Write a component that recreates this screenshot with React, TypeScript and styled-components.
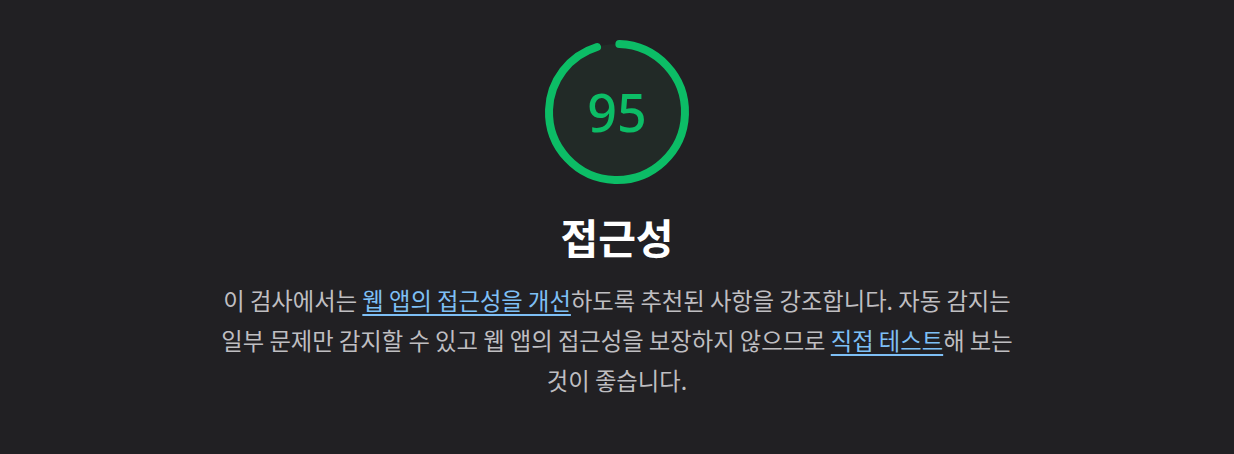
import styled, { createGlobalStyle } from "styled-components";

const GlobalStyle = createGlobalStyle`
    html, body {
        margin: 0;
        padding: 0;
        background: #212023;
    }
    body {
        font-family: Roboto, "Noto Sans CJK KR", sans-serif;
    }
`;

const SCORE = 95;
const RADIUS = 68;
const CIRC = 2 * Math.PI * RADIUS;

export default function App() {
    const arc = (SCORE / 100) * CIRC - 2;
    return (
        <>
            <GlobalStyle />
            <Page>
                <Gauge>
                    <svg width="152" height="152" viewBox="0 0 152 152">
                        <circle cx="76" cy="76" r={RADIUS} fill="#222a27" />
                        <circle
                            cx="76"
                            cy="76"
                            r={RADIUS}
                            fill="none"
                            stroke="#0cbd66"
                            strokeWidth="8"
                            strokeLinecap="round"
                            strokeDasharray={`${arc} ${CIRC}`}
                            transform="rotate(-88 76 76)"
                        />
                    </svg>
                    <Score>{SCORE}</Score>
                </Gauge>
                <Title>접근성</Title>
                <Description>
                    이 검사에서는 <Link href="#">웹 앱의 접근성을 개선</Link>하도록 추천된 사항을 강조합니다. 자동 감지는
                    일부 문제만 감지할 수 있고 웹 앱의 접근성을 보장하지 않으므로 <Link href="#">직접 테스트</Link>해 보는
                    것이 좋습니다.
                </Description>
            </Page>
        </>
    );
}

const Page = styled.main`
    display: flex;
    flex-direction: column;
    align-items: center;
    padding-top: 36px;
`;

const Gauge = styled.div`
    position: relative;
    width: 152px;
    height: 152px;

    svg {
        display: block;
    }
`;

const Score = styled.div`
    position: absolute;
    inset: 0;
    display: flex;
    align-items: center;
    justify-content: center;
    color: #0cbd66;
    font-family: "Noto Sans", sans-serif;
    font-size: 52px;
    font-weight: 500;
    line-height: 1;
`;

const Title = styled.h2`
    margin: 24px 0 0;
    color: #ffffff;
    font-family: "Noto Sans CJK KR", sans-serif;
    font-size: 41px;
    font-weight: 700;
    line-height: 48px;
`;

const Description = styled.p`
    margin: 20px 0 0;
    width: 800px;
    text-align: center;
    color: #bfbec1;
    font-family: "Noto Sans CJK KR", sans-serif;
    font-size: 23.3px;
    line-height: 40px;
`;

const Link = styled.a`
    color: #7ebff5;
    text-decoration: underline;
    text-decoration-thickness: 2px;
    text-underline-offset: 4px;
`;
